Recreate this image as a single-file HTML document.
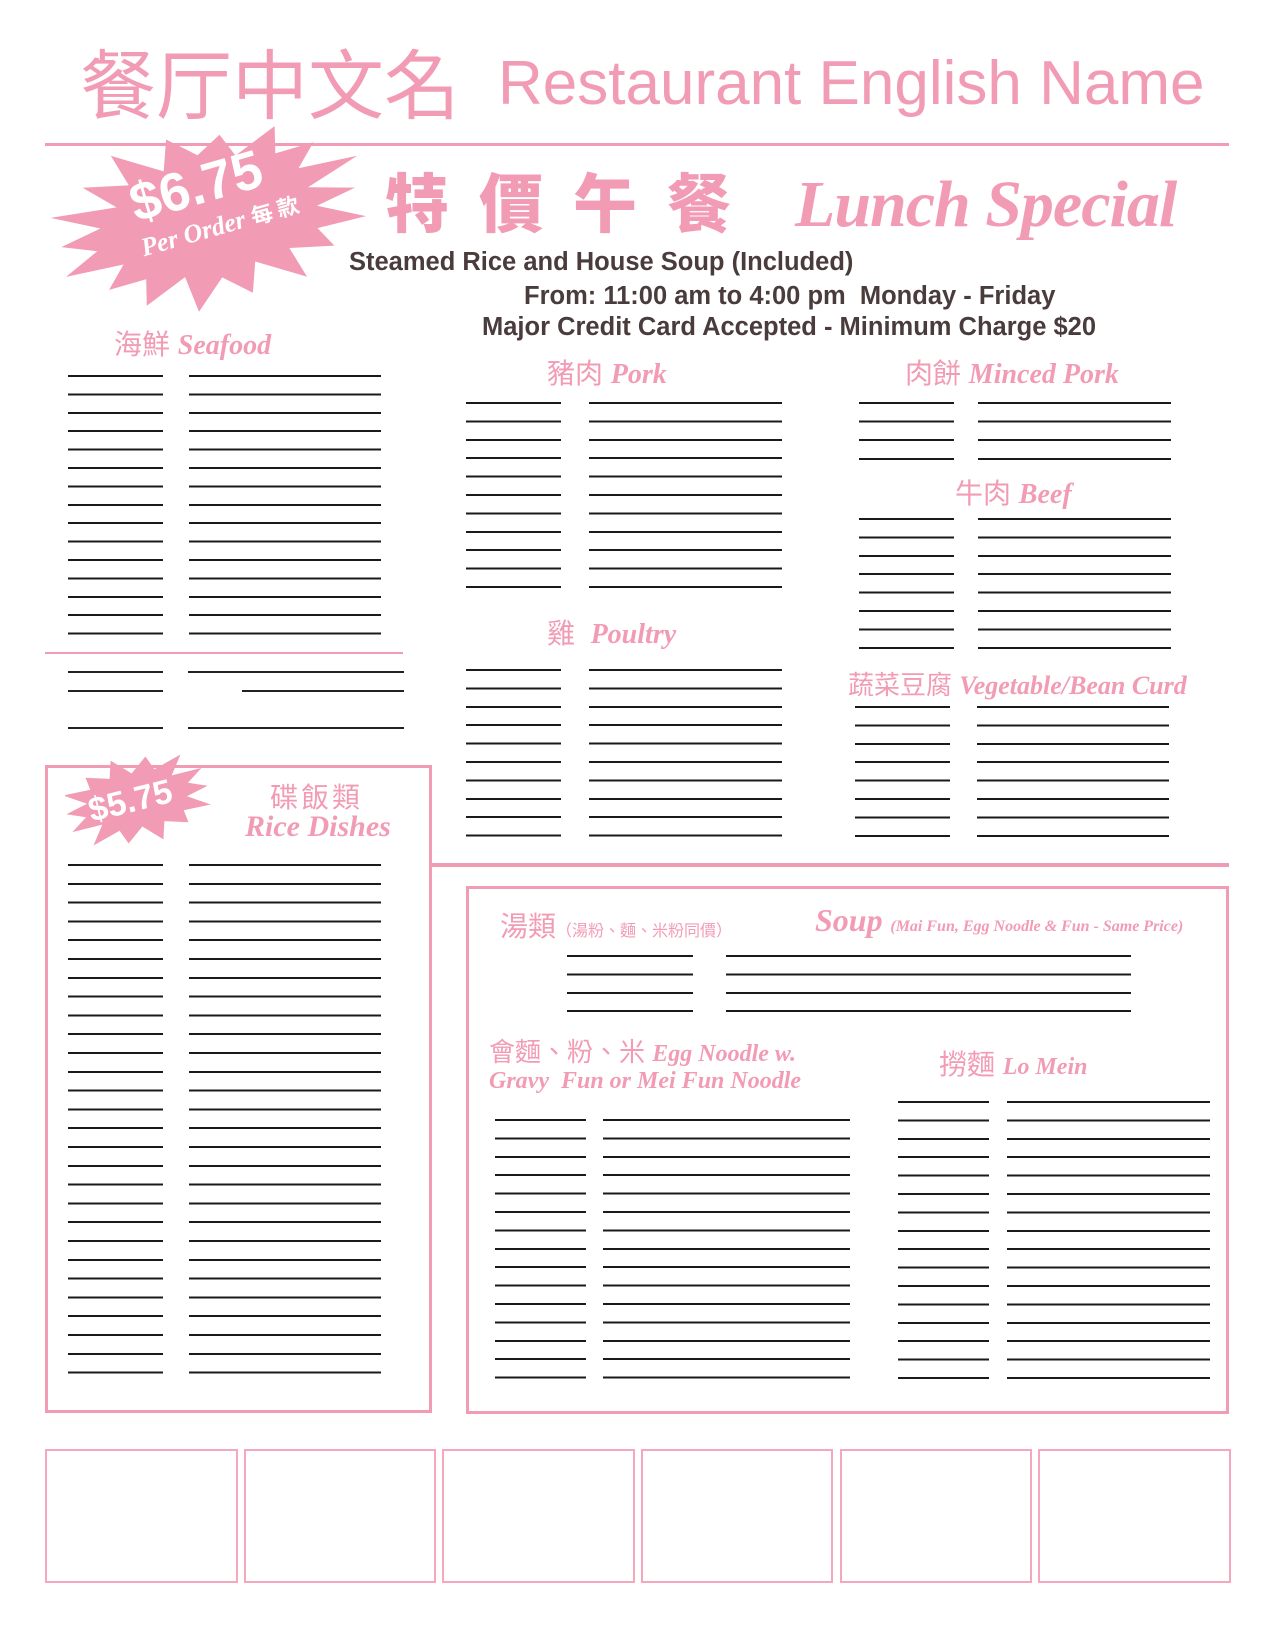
<!DOCTYPE html>
<html><head><meta charset="utf-8"><style>
body{margin:0;background:#fff;width:1275px;height:1650px;position:relative;overflow:hidden;font-family:"Liberation Sans","Noto Sans CJK TC",sans-serif}
.a{position:absolute}
.p{color:#f29bb4}
.cjk{font-family:"Noto Sans CJK TC","WenQuanYi Zen Hei",sans-serif}
.scr{font-family:"Liberation Serif",serif;font-style:italic;font-weight:bold;color:#f29bb4}
.ln{position:absolute;background:repeating-linear-gradient(to bottom,#1a1a1a 0 2px,transparent 2px var(--s))}
.dk{color:#4a3c3c;font-weight:bold;font-size:25.5px;white-space:nowrap}
.box{position:absolute;border:3px solid #f29bb4;box-sizing:border-box}
.bb{position:absolute;border:2px solid #f4a8bd;box-sizing:border-box;top:1449px;height:134px}
.h{position:absolute;white-space:nowrap;font-size:28px}
</style></head><body>
<div class="a p cjk" style="left:80px;top:30px;font-size:76px;line-height:100px">餐厅中文名</div>
<div class="a p" style="left:498px;top:44px;font-size:62px;line-height:80px">Restaurant English Name</div>
<div class="a" style="left:45px;top:143px;width:1184px;height:3px;background:#f29bb4"></div>

<svg class="a" style="left:0;top:0" width="400" height="330"><polygon id="st" fill="#f29bb4"/></svg>
<div class="a" style="left:105px;top:150px;transform:rotate(-16deg);transform-origin:left top;color:#fff">
<div style="font-weight:bold;font-size:54px;line-height:60px;margin-left:10px;margin-top:30px">$6.75</div>
<div style="font-family:'Liberation Serif',serif;font-style:italic;font-weight:bold;font-size:26px;margin-top:-2px;margin-left:8px">Per Order <span class="cjk" style="font-style:normal;font-size:22px">每 款</span></div>
</div>

<div class="a p cjk" style="left:385px;top:160px;font-size:64px;font-weight:900;letter-spacing:30px;line-height:80px">特價午餐</div>
<div class="a scr" style="left:795px;top:165px;font-size:66px;line-height:80px;letter-spacing:-1px">Lunch Special</div>
<div class="a dk" style="left:349px;top:248px">Steamed Rice and House Soup (Included)</div>
<div class="a dk" style="left:524px;top:282px">From: 11:00 am to 4:00 pm&nbsp; Monday - Friday</div>
<div class="a dk" style="left:482px;top:313px">Major Credit Card Accepted - Minimum Charge $20</div>

<div class="h" style="left:114px;top:323px"><span class="p cjk">海鮮</span> <span class="scr">Seafood</span></div>
<div class="ln" style="--s:18.4px;left:68px;top:375px;width:95px;height:262px"></div>
<div class="ln" style="--s:18.4px;left:189px;top:375px;width:192px;height:262px"></div>
<div class="a" style="left:45px;top:652px;width:358px;height:2px;background:#f29bb4"></div>
<div class="a" style="left:68px;top:671px;width:95px;height:2px;background:#222"></div>
<div class="a" style="left:188px;top:671px;width:216px;height:2px;background:#222"></div>
<div class="a" style="left:68px;top:690px;width:95px;height:2px;background:#222"></div>
<div class="a" style="left:242px;top:690px;width:162px;height:2px;background:#222"></div>
<div class="a" style="left:68px;top:727px;width:95px;height:2px;background:#222"></div>
<div class="a" style="left:188px;top:727px;width:216px;height:2px;background:#222"></div>

<div class="h" style="left:547px;top:352px"><span class="p cjk">豬肉</span> <span class="scr">Pork</span></div>
<div class="ln" style="--s:18.4px;left:466px;top:402px;width:95px;height:190px"></div>
<div class="ln" style="--s:18.4px;left:589px;top:402px;width:193px;height:190px"></div>
<div class="h" style="left:547px;top:612px"><span class="p cjk">雞</span>&nbsp; <span class="scr">Poultry</span></div>
<div class="ln" style="--s:18.4px;left:466px;top:669px;width:95px;height:170px"></div>
<div class="ln" style="--s:18.4px;left:589px;top:669px;width:193px;height:170px"></div>

<div class="h" style="left:905px;top:352px"><span class="p cjk">肉餅</span> <span class="scr">Minced Pork</span></div>
<div class="ln" style="--s:18.6px;left:859px;top:402px;width:95px;height:60px"></div>
<div class="ln" style="--s:18.6px;left:978px;top:402px;width:193px;height:60px"></div>
<div class="h" style="left:955px;top:472px"><span class="p cjk">牛肉</span> <span class="scr">Beef</span></div>
<div class="ln" style="--s:18.4px;left:859px;top:518px;width:95px;height:132px"></div>
<div class="ln" style="--s:18.4px;left:978px;top:518px;width:193px;height:132px"></div>
<div class="h" style="left:848px;top:665px;font-size:26px"><span class="p cjk">蔬菜豆腐</span> <span class="scr">Vegetable/Bean Curd</span></div>
<div class="ln" style="--s:18.4px;left:855px;top:706px;width:95px;height:132px"></div>
<div class="ln" style="--s:18.4px;left:977px;top:706px;width:192px;height:132px"></div>

<div class="a" style="left:431px;top:863px;width:798px;height:4px;background:#f29bb4"></div>
<div class="box" style="left:45px;top:765px;width:387px;height:648px"></div>
<svg class="a" style="left:65px;top:755px" width="170" height="95"><polygon id="st2" fill="#f29bb4"/></svg>
<div class="a" style="left:88px;top:782px;color:#fff;font-weight:bold;font-size:34px;transform:rotate(-14deg)">$5.75</div>
<div class="a p cjk" style="left:270px;top:776px;font-size:28px;letter-spacing:3px">碟飯類</div>
<div class="a scr" style="left:245px;top:810px;font-size:30px">Rice Dishes</div>
<div class="ln" style="--s:18.8px;left:68px;top:864px;width:95px;height:512px"></div>
<div class="ln" style="--s:18.8px;left:189px;top:864px;width:192px;height:512px"></div>

<div class="box" style="left:466px;top:886px;width:763px;height:528px"></div>
<div class="h" style="left:500px;top:905px"><span class="p cjk">湯類</span><span class="p cjk" style="font-size:16px">（湯粉、麵、米粉同價）</span></div>
<div class="h" style="left:815px;top:902px"><span class="scr" style="font-size:32px">Soup</span> <span class="scr" style="font-size:16px">(Mai Fun, Egg Noodle &amp; Fun - Same Price)</span></div>
<div class="ln" style="--s:18.4px;left:567px;top:955px;width:126px;height:60px"></div>
<div class="ln" style="--s:18.4px;left:726px;top:955px;width:405px;height:60px"></div>
<div class="h" style="left:489px;top:1032px;font-size:26px"><span class="p cjk">會麵、粉、米</span> <span class="scr" style="font-size:24px">Egg Noodle w.</span></div>
<div class="h scr" style="left:489px;top:1068px;font-size:24px">Gravy&nbsp; Fun or Mei Fun Noodle</div>
<div class="h" style="left:939px;top:1043px"><span class="p cjk">撈麵</span> <span class="scr" style="font-size:24px">Lo Mein</span></div>
<div class="ln" style="--s:18.4px;left:495px;top:1119px;width:91px;height:262px"></div>
<div class="ln" style="--s:18.4px;left:603px;top:1119px;width:247px;height:262px"></div>
<div class="ln" style="--s:18.4px;left:898px;top:1101px;width:91px;height:280px"></div>
<div class="ln" style="--s:18.4px;left:1007px;top:1101px;width:203px;height:280px"></div>

<div class="bb" style="left:45px;width:193px"></div>
<div class="bb" style="left:244px;width:192px"></div>
<div class="bb" style="left:442px;width:193px"></div>
<div class="bb" style="left:641px;width:192px"></div>
<div class="bb" style="left:840px;width:192px"></div>
<div class="bb" style="left:1038px;width:193px"></div>
<script>
function star(id,cx,cy,R,r,rx,n,rot){var p=[];for(var i=0;i<n*2;i++){var a=Math.PI*i/n;var rr=(i%2?r:R)*(1+((i*37)%7)/40);var x=rr*Math.cos(a)*rx,y=rr*Math.sin(a);var c=Math.cos(rot),s=Math.sin(rot);p.push((cx+x*c-y*s).toFixed(1)+','+(cy+x*s+y*c).toFixed(1));}document.getElementById(id).setAttribute('points',p.join(' '));}
star('st',210,217,80,56,1.85,18,-0.2);
star('st2',72,45,40,27,1.8,14,-0.2);
</script>
</body></html>
